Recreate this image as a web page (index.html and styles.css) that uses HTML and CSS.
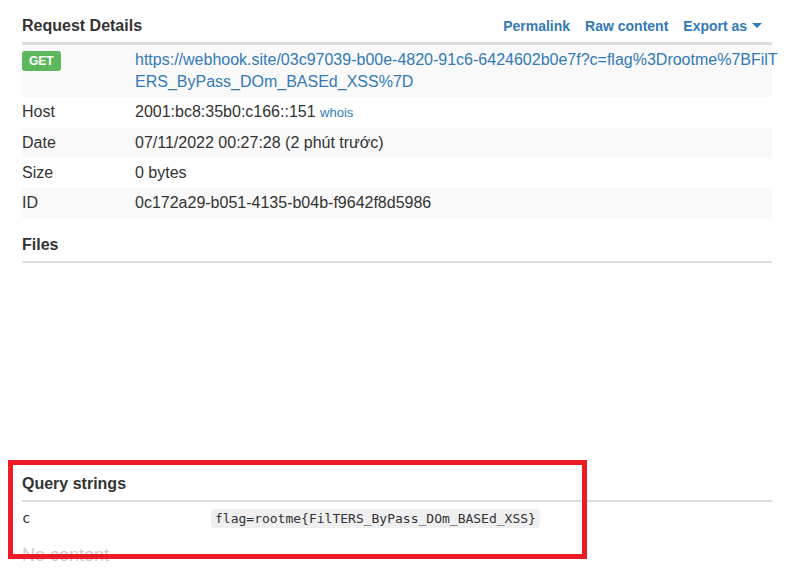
FILE: index.html
```html
<!DOCTYPE html>
<html lang="vi">
<head>
<meta charset="utf-8">
<title>Request Details</title>
<link rel="stylesheet" href="styles.css">
</head>
<body>
<div class="page">
  <div class="panel-head">
    <h3 class="title">Request Details</h3>
    <nav class="actions">
      <a href="#">Permalink</a>
      <a href="#">Raw content</a>
      <a href="#">Export as <span class="caret"></span></a>
    </nav>
  </div>
  <table class="details">
    <tr class="odd">
      <td class="key"><span class="label-get">GET</span></td>
      <td class="val"><a class="url" href="#">https://webhook.site/03c97039-b00e-4820-91c6-6424602b0e7f?c=flag%3Drootme%7BFilT<br>ERS_ByPass_DOm_BASEd_XSS%7D</a></td>
    </tr>
    <tr>
      <td class="key">Host</td>
      <td class="val">2001:bc8:35b0:c166::151 <a class="whois" href="#">whois</a></td>
    </tr>
    <tr class="odd">
      <td class="key">Date</td>
      <td class="val">07/11/2022 00:27:28 (2 phút trước)</td>
    </tr>
    <tr>
      <td class="key">Size</td>
      <td class="val">0 bytes</td>
    </tr>
    <tr class="odd">
      <td class="key">ID</td>
      <td class="val">0c172a29-b051-4135-b04b-f9642f8d5986</td>
    </tr>
  </table>

  <h4 class="section-title">Files</h4>
  <div class="files-body"></div>

  <h4 class="section-title">Query strings</h4>
  <table class="query">
    <tr>
      <td class="qkey">c</td>
      <td class="qval"><code>flag=rootme{FilTERS_ByPass_DOm_BASEd_XSS}</code></td>
    </tr>
  </table>
  <p class="empty">No content</p>
</div>
<div class="highlight"></div>
</body>
</html>
```

FILE: styles.css
```css
html, body {
  margin: 0;
  padding: 0;
  background: #fff;
}
body {
  font-family: "Liberation Sans", Arial, sans-serif;
  font-size: 16px;
  color: #333;
  position: relative;
  height: 586px;
  overflow: hidden;
}
a {
  color: #337ab7;
  text-decoration: none;
}
.page {
  padding: 0 22px;
}
.panel-head {
  display: flex;
  justify-content: space-between;
  align-items: center;
  height: 42px;
  border-bottom: 3px solid #ddd;
  box-sizing: content-box;
}
.title {
  margin: 0;
  font-size: 16px;
  font-weight: bold;
  line-height: 22px;
  padding-top: 9px;
}
.actions {
  display: flex;
  gap: 15px;
  padding-right: 10px;
  padding-top: 9px;
  font-size: 14px;
  font-weight: bold;
}
.caret {
  display: inline-block;
  width: 0;
  height: 0;
  border-left: 5px solid transparent;
  border-right: 5px solid transparent;
  border-top: 5px solid #337ab7;
  vertical-align: middle;
  margin-left: 1px;
  margin-top: -2px;
}
.details {
  width: 100%;
  border-collapse: collapse;
  table-layout: fixed;
}
.details td {
  padding: 4px 0;
  line-height: 22px;
  vertical-align: top;
}
.details tr.odd td {
  background: #f9f9f9;
}
.details .key {
  width: 113px;
}
.url {
  white-space: nowrap;
}
.label-get {
  display: inline-block;
  background: #5cb85c;
  color: #fff;
  font-size: 12px;
  font-weight: bold;
  line-height: 20px;
  height: 20px;
  padding: 0 7px;
  border-radius: 3px;
  margin-top: 2px;
  vertical-align: top;
}
.whois {
  font-size: 13px;
}
.section-title {
  margin: 0;
  font-size: 16px;
  font-weight: bold;
  line-height: 22px;
  padding: 16px 0 5px;
  border-bottom: 2px solid #ddd;
}
.files-body {
  height: 194px;
}
.query {
  width: 100%;
  border-collapse: collapse;
  table-layout: fixed;
}
.query td {
  padding: 5px 0;
  line-height: 22px;
  vertical-align: middle;
}
.qkey {
  width: 189px;
  font-family: "DejaVu Sans Mono", "Liberation Mono", monospace;
  font-size: 14px;
  padding-left: 1px;
  vertical-align: top;
}
.query td.qkey {
  padding-top: 3px;
}
code {
  font-family: "DejaVu Sans Mono", "Liberation Mono", monospace;
  font-size: 13px;
  background: #efefef;
  color: #333;
  border-radius: 4px;
  padding: 2px 4px;
}
.empty {
  margin: 9px 0 0;
  font-size: 18px;
  line-height: 22px;
  color: #ccc;
}
.highlight {
  position: absolute;
  left: 8px;
  top: 460px;
  width: 579px;
  height: 99px;
  box-sizing: border-box;
  border: 5px solid #ed1c24;
  pointer-events: none;
}
```
